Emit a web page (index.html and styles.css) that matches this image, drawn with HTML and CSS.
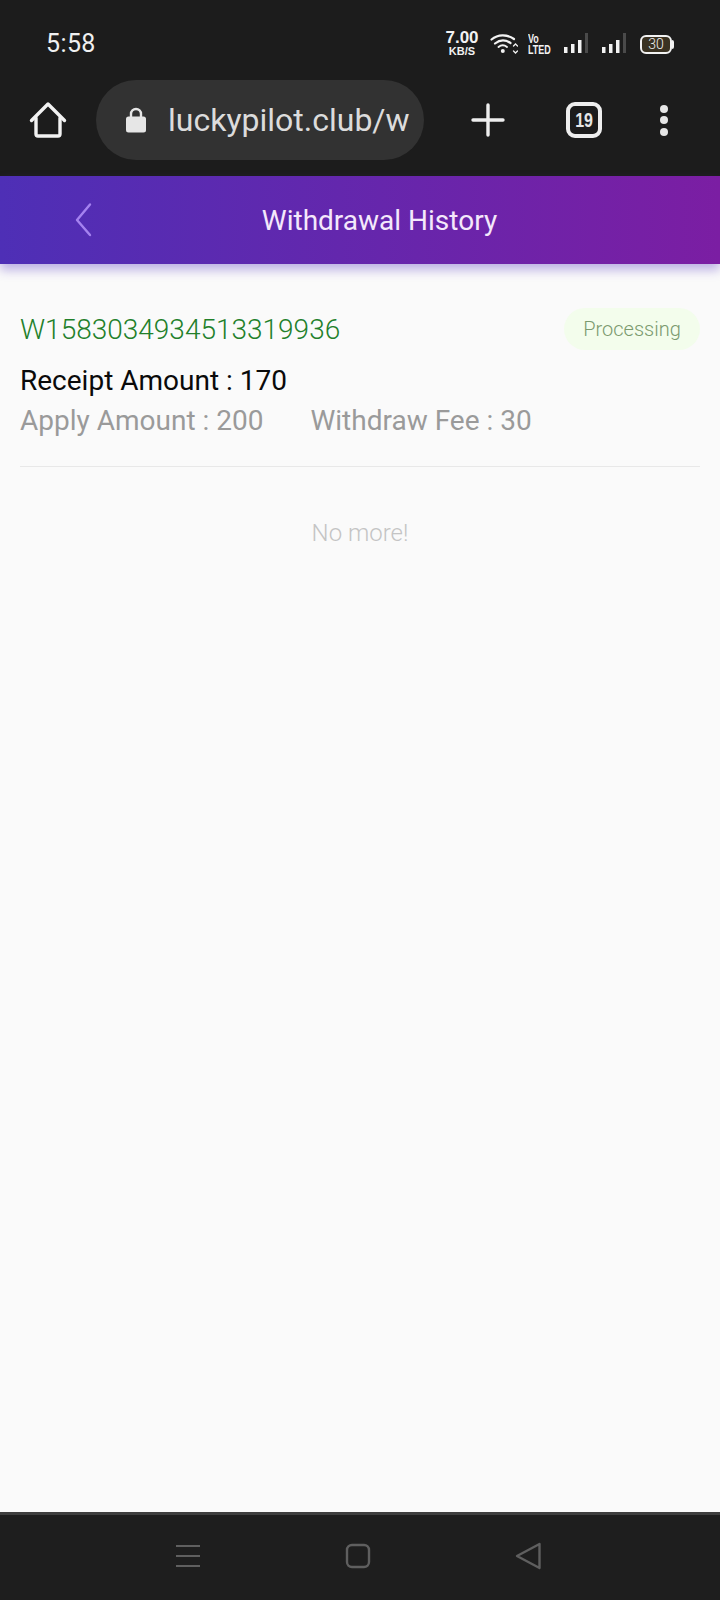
FILE: index.html
```html
<!DOCTYPE html>
<html lang="en">
<head>
<meta charset="utf-8">
<title>Withdrawal History</title>
<link rel="stylesheet" href="styles.css">
</head>
<body>
<div class="phone">
  <div class="chrome">
    <div class="status">
      <span class="time">5:58</span>
      <div class="status-icons">
        <div class="speed"><span class="speed-num">7.00</span><span class="speed-unit">KB/S</span></div>
        <svg class="wifi" width="28" height="24" viewBox="0 0 28 24" fill="none" stroke="#f2f2f2" stroke-linecap="round">
          <path d="M1.500 7.500C8 2 17 2 24 7" stroke-width="2.200"/>
          <path d="M5 11.500C10 7.500 15.500 7.500 20.500 11" stroke-width="2.200"/>
          <path d="M8.500 15C11 13 14.500 13 17 15" stroke-width="2"/>
          <circle cx="12.800" cy="19" r="2" fill="#f2f2f2" stroke="none"/>
          <path d="M23.500 14l2-2 2 2M23.500 19l2 2 2-2" stroke-width="1.300"/>
        </svg>
        <div class="volte"><span>Vo</span><span>LTED</span></div>
        <svg class="signal" width="24" height="22" viewBox="0 0 24 22"><rect x="0" y="14" width="3.500" height="6" fill="#f2f2f2"/><rect x="7" y="11" width="3.500" height="9" fill="#f2f2f2"/><rect x="14" y="7" width="3.500" height="13" fill="#f2f2f2"/><rect x="21" y="0" width="3" height="20" fill="#4a4a4a"/></svg>
        <svg class="signal" width="24" height="22" viewBox="0 0 24 22"><rect x="0" y="14" width="3.500" height="6" fill="#f2f2f2"/><rect x="7" y="11" width="3.500" height="9" fill="#f2f2f2"/><rect x="14" y="7" width="3.500" height="13" fill="#f2f2f2"/><rect x="21" y="0" width="3" height="20" fill="#4a4a4a"/></svg>
        <div class="battery"><span class="battery-body">30</span><span class="battery-tip"></span></div>
      </div>
    </div>
    <div class="toolbar">
      <svg class="home" width="38" height="38" viewBox="0 0 38 38" fill="none" stroke="#f2f2f2" stroke-width="3.400" stroke-linejoin="round" stroke-linecap="round">
        <path d="M2.500 19.500L19 3l16.500 16.500"/>
        <path d="M7 17v16a2 2 0 0 0 2 2h20a2 2 0 0 0 2-2V17"/>
      </svg>
      <div class="url">
        <svg class="lock" width="22" height="26" viewBox="0 0 22 26"><path d="M6 11V7a5 5 0 0 1 10 0v4" fill="none" stroke="#e6e6e6" stroke-width="2.400"/><rect x="1" y="9.500" width="20" height="16" rx="2.500" fill="#e6e6e6"/></svg>
        <span class="url-text">luckypilot.club/w</span>
      </div>
      <svg class="plus" width="34" height="34" viewBox="0 0 34 34" stroke="#eeeeee" stroke-width="3.400" stroke-linecap="round"><path d="M17 2v30M2 17h30"/></svg>
      <div class="tabs"><span class="tabs-count">19</span></div>
      <div class="dots"><i></i><i></i><i></i></div>
    </div>
  </div>
  <header class="header">
    <svg class="back" width="18" height="36" viewBox="0 0 18 36" fill="none" stroke="#a582f0" stroke-width="2.400" stroke-linecap="round" stroke-linejoin="round"><path d="M15 2.500L2 18l13 15"/></svg>
    <h1 class="title">Withdrawal History</h1>
  </header>
  <main class="content">
    <article class="record">
      <div class="record-top">
        <span class="order">W1583034934513319936</span>
        <span class="badge">Processing</span>
      </div>
      <div class="receipt">Receipt Amount : 170</div>
      <div class="meta"><span class="apply">Apply Amount : 200</span><span>Withdraw Fee : 30</span></div>
    </article>
    <p class="no-more">No more!</p>
  </main>
  <nav class="navbar">
    <svg class="nav-menu" width="26" height="24" viewBox="0 0 26 24" stroke="#5f5f5f" stroke-width="2.200"><path d="M1 2h24M1 12h24M1 22h24"/></svg>
    <svg width="26" height="26" viewBox="0 0 26 26" fill="none" stroke="#5f5f5f" stroke-width="2.400"><rect x="2" y="2" width="22" height="22" rx="5"/></svg>
    <svg width="26" height="28" viewBox="0 0 26 28" fill="none" stroke="#5f5f5f" stroke-width="2.400" stroke-linejoin="round"><path d="M24.500 2L2 14l22.500 12z"/></svg>
  </nav>
</div>
</body>
</html>
```

FILE: styles.css
```css
* { box-sizing: border-box; }
html, body { margin: 0; padding: 0; }
body { font-family: Roboto, "Noto Sans", sans-serif; background: #fafafa; }
.phone { width: 720px; height: 1600px; display: flex; flex-direction: column; overflow: hidden; }
.chrome { height: 176px; background: #1c1c1c; flex: none; display: flex; flex-direction: column; }
.status { height: 80px; padding: 19px 46px 0 46px; display: flex; justify-content: space-between; align-items: flex-start; }
.time { color: #f0f0f0; font-size: 25px; line-height: 50px; letter-spacing: 0.4px; }
.status-icons { display: flex; align-items: center; height: 50px; }
.speed { display: flex; flex-direction: column; align-items: center; width: 34px; color: #f2f2f2; font-family: "Liberation Sans", sans-serif; font-weight: 700; margin-right: 11px; }
.speed-num { font-size: 17px; line-height: 14px; }
.speed-unit { font-size: 11px; line-height: 12px; }
.wifi { margin-right: 10px; }
.volte { display: flex; flex-direction: column; width: 24px; color: #f2f2f2; font-family: "Liberation Sans", sans-serif; font-weight: 700; font-size: 9px; line-height: 8px; margin-right: 12px; transform: scaleY(1.45); }
.signal { margin-right: 14px; }
.battery { display: flex; align-items: center; }
.battery-body { width: 32px; height: 19px; border: 2px solid #f2f2f2; border-radius: 6px; background: #3a3222; color: #f2f2f2; font-size: 14px; font-weight: 300; line-height: 15px; text-align: center; }
.battery-tip { width: 2px; height: 9px; background: #f2f2f2; border-radius: 0 2px 2px 0; }
.toolbar { height: 80px; display: flex; align-items: center; padding-left: 29px; }
.home { flex: none; }
.url { width: 328px; height: 80px; margin-left: 29px; background: #323232; border-radius: 40px; display: flex; align-items: center; padding-left: 29px; overflow: hidden; }
.lock { flex: none; }
.url-text { margin-left: 21px; color: #dcdcdc; font-size: 32px; white-space: nowrap; }
.plus { margin-left: 47px; flex: none; }
.tabs { margin-left: 61px; width: 36px; height: 36px; border: 4px solid #eeeeee; border-radius: 9px; color: #e6e6e6; font-family: "Liberation Sans", sans-serif; font-size: 20px; font-weight: 700; display: flex; align-items: center; justify-content: center; }
.tabs-count { display: block; transform: scaleX(0.8); }
.dots { margin-left: 58px; display: flex; flex-direction: column; gap: 3.500px; }
.dots i { width: 8px; height: 8px; border-radius: 50%; background: #e6e6e6; display: block; }
.header { height: 88px; flex: none; position: relative; z-index: 1; display: flex; align-items: center; justify-content: center; background: linear-gradient(90deg, #4e2fb6, #7b1ea3); box-shadow: 0 6px 10px rgba(80, 50, 190, 0.36); }
.back { position: absolute; left: 75px; top: 26px; }
.title { margin: 0 0 0 39px; color: #f4e8fb; font-size: 28px; font-weight: 400; }
.content { flex: 1; padding: 44px 20px 0; background: #fafafa; }
.record { height: 159px; border-bottom: 1px solid #e8e8e8; }
.record-top { display: flex; justify-content: space-between; align-items: center; height: 42px; }
.order { color: #22802a; font-size: 28px; font-weight: 300; }
.badge { width: 136px; height: 42px; border-radius: 21px; background: #f3fdec; color: #7b9a6f; font-size: 20px; font-weight: 300; display: flex; align-items: center; justify-content: center; }
.receipt { margin-top: 11px; color: #0a0a0a; font-size: 28px; line-height: 40px; }
.meta { color: #9a9a9a; font-size: 28px; line-height: 40px; display: flex; }
.apply { margin-right: 47px; }
.no-more { margin: 50px 0 0; text-align: center; color: #c4c4c4; font-size: 24px; font-weight: 300; line-height: 32px; }
.navbar { height: 88px; flex: none; background: #1e1e1e; border-top: 3px solid #3e3e3e; display: flex; align-items: center; gap: 144px; padding: 0 0 4px 175px; }
.nav-menu { flex: none; }
```
